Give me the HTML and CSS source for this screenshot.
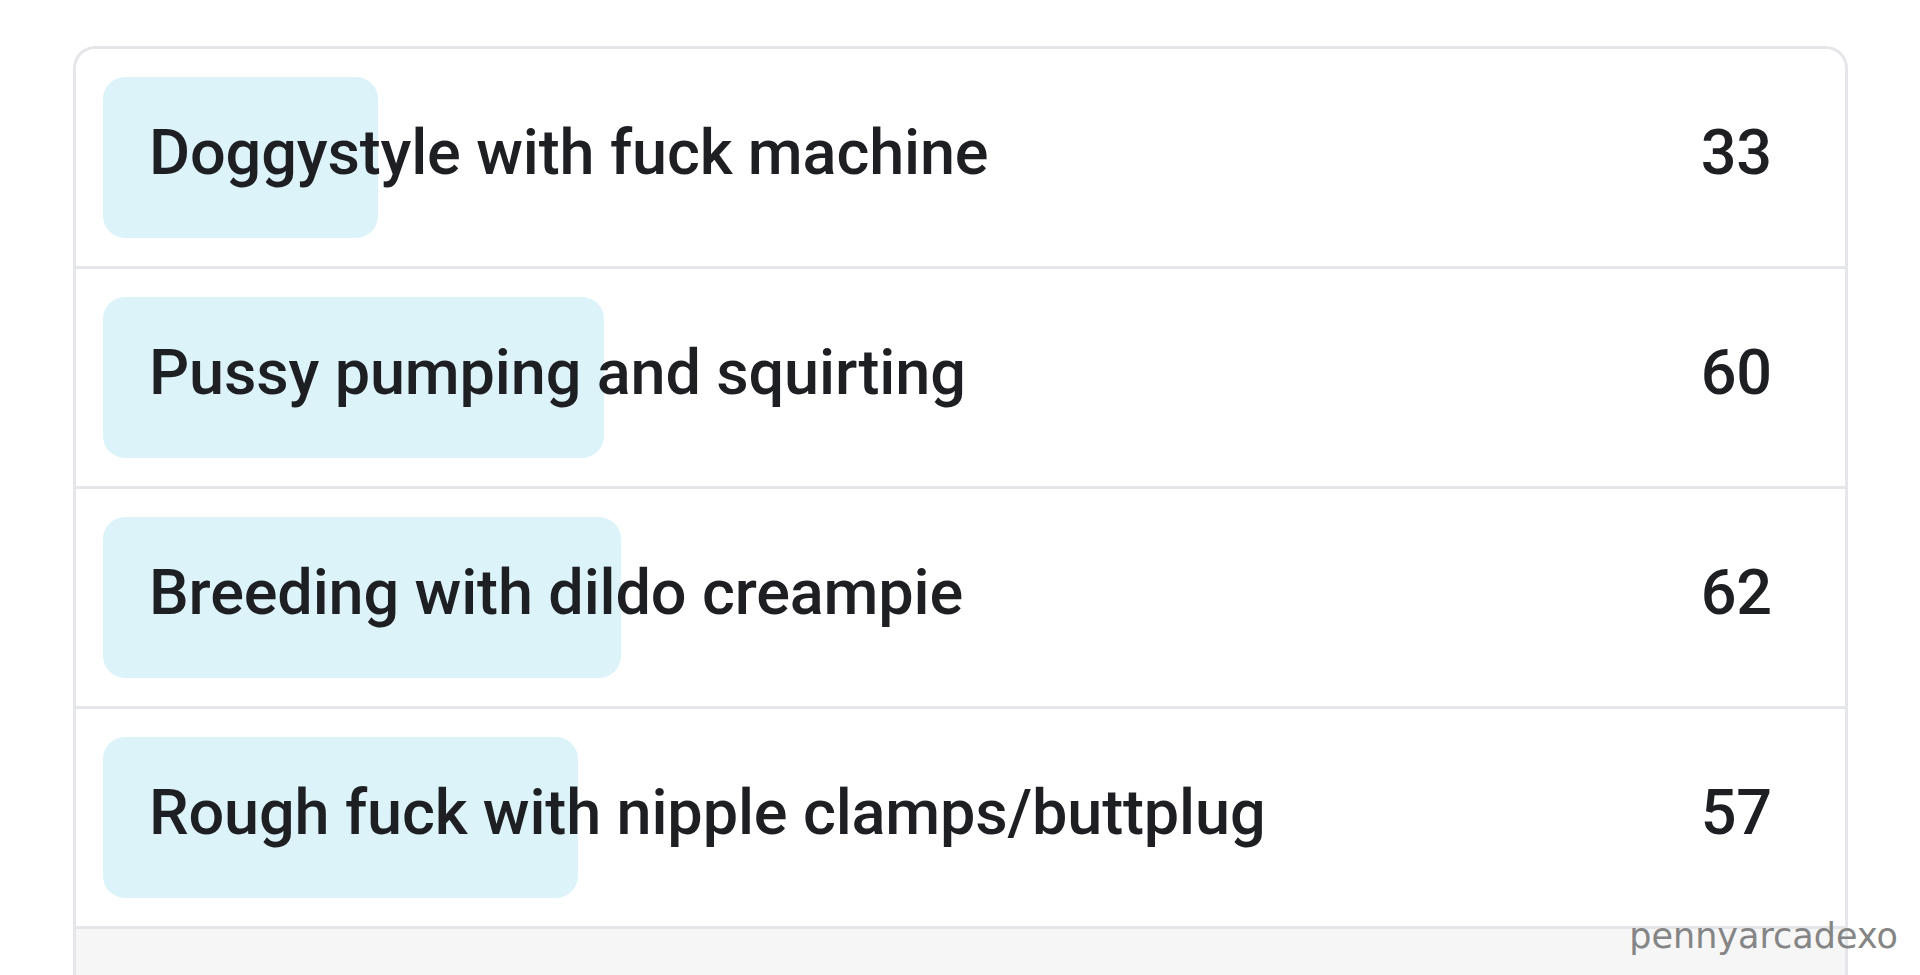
FILE: index.html
```html
<!doctype html>
<html>
<head>
<meta charset="utf-8">
<title>Poll</title>
<link rel="stylesheet" href="styles.css">
</head>
<body>
<section class="poll">
	<ul class="options">
		<li>
			<div class="option">
				<span class="fill" style="width: 275px"></span>
				<span class="label">Doggystyle with fuck machine</span>
				<span class="count">33</span>
			</div>
		</li>
		<li>
			<div class="option">
				<span class="fill" style="width: 501px"></span>
				<span class="label">Pussy pumping and squirting</span>
				<span class="count">60</span>
			</div>
		</li>
		<li>
			<div class="option">
				<span class="fill" style="width: 518px"></span>
				<span class="label">Breeding with dildo creampie</span>
				<span class="count">62</span>
			</div>
		</li>
		<li>
			<div class="option">
				<span class="fill" style="width: 475px"></span>
				<span class="label">Rough fuck with nipple clamps/buttplug</span>
				<span class="count">57</span>
			</div>
		</li>
	</ul>
	<div class="foot"></div>
</section>
<span class="mark">pennyarcadexo</span>
</body>
</html>
```
FILE: styles.css
```css
html, body {
	margin: 0;
	padding: 0;
	background: #fff;
	height: 100%;
	overflow: hidden;
}
body {
	padding: 46px 72px 0 73px;
	box-sizing: border-box;
	font-family: Roboto, "Liberation Sans", sans-serif;
}
.poll {
	border: 3px solid #e4e6e9;
	border-bottom: 0;
	border-radius: 22px 22px 0 0;
	overflow: hidden;
	background: #fff;
}
.options {
	margin: 0;
	padding: 0;
	list-style: none;
}
.options li {
	padding: 28px 27px;
	border-bottom: 3px solid #e4e6e9;
}
.option {
	position: relative;
	height: 161px;
	display: flex;
	align-items: center;
	justify-content: space-between;
	padding: 0 46px 10px 46px;
	box-sizing: border-box;
	font-size: 63px;
	font-weight: 500;
	letter-spacing: -0.15px;
	color: #1d1f23;
}
.fill {
	position: absolute;
	left: 0;
	top: 0;
	bottom: 0;
	background: #dcf3f9;
	border-radius: 22px;
}
.label, .count {
	position: relative;
}
.foot {
	height: 120px;
	background: #f6f6f6;
}
.mark {
	position: absolute;
	right: 22px;
	bottom: 19px;
	font: 35px "DejaVu Sans", sans-serif;
	color: #858585;
}
```
